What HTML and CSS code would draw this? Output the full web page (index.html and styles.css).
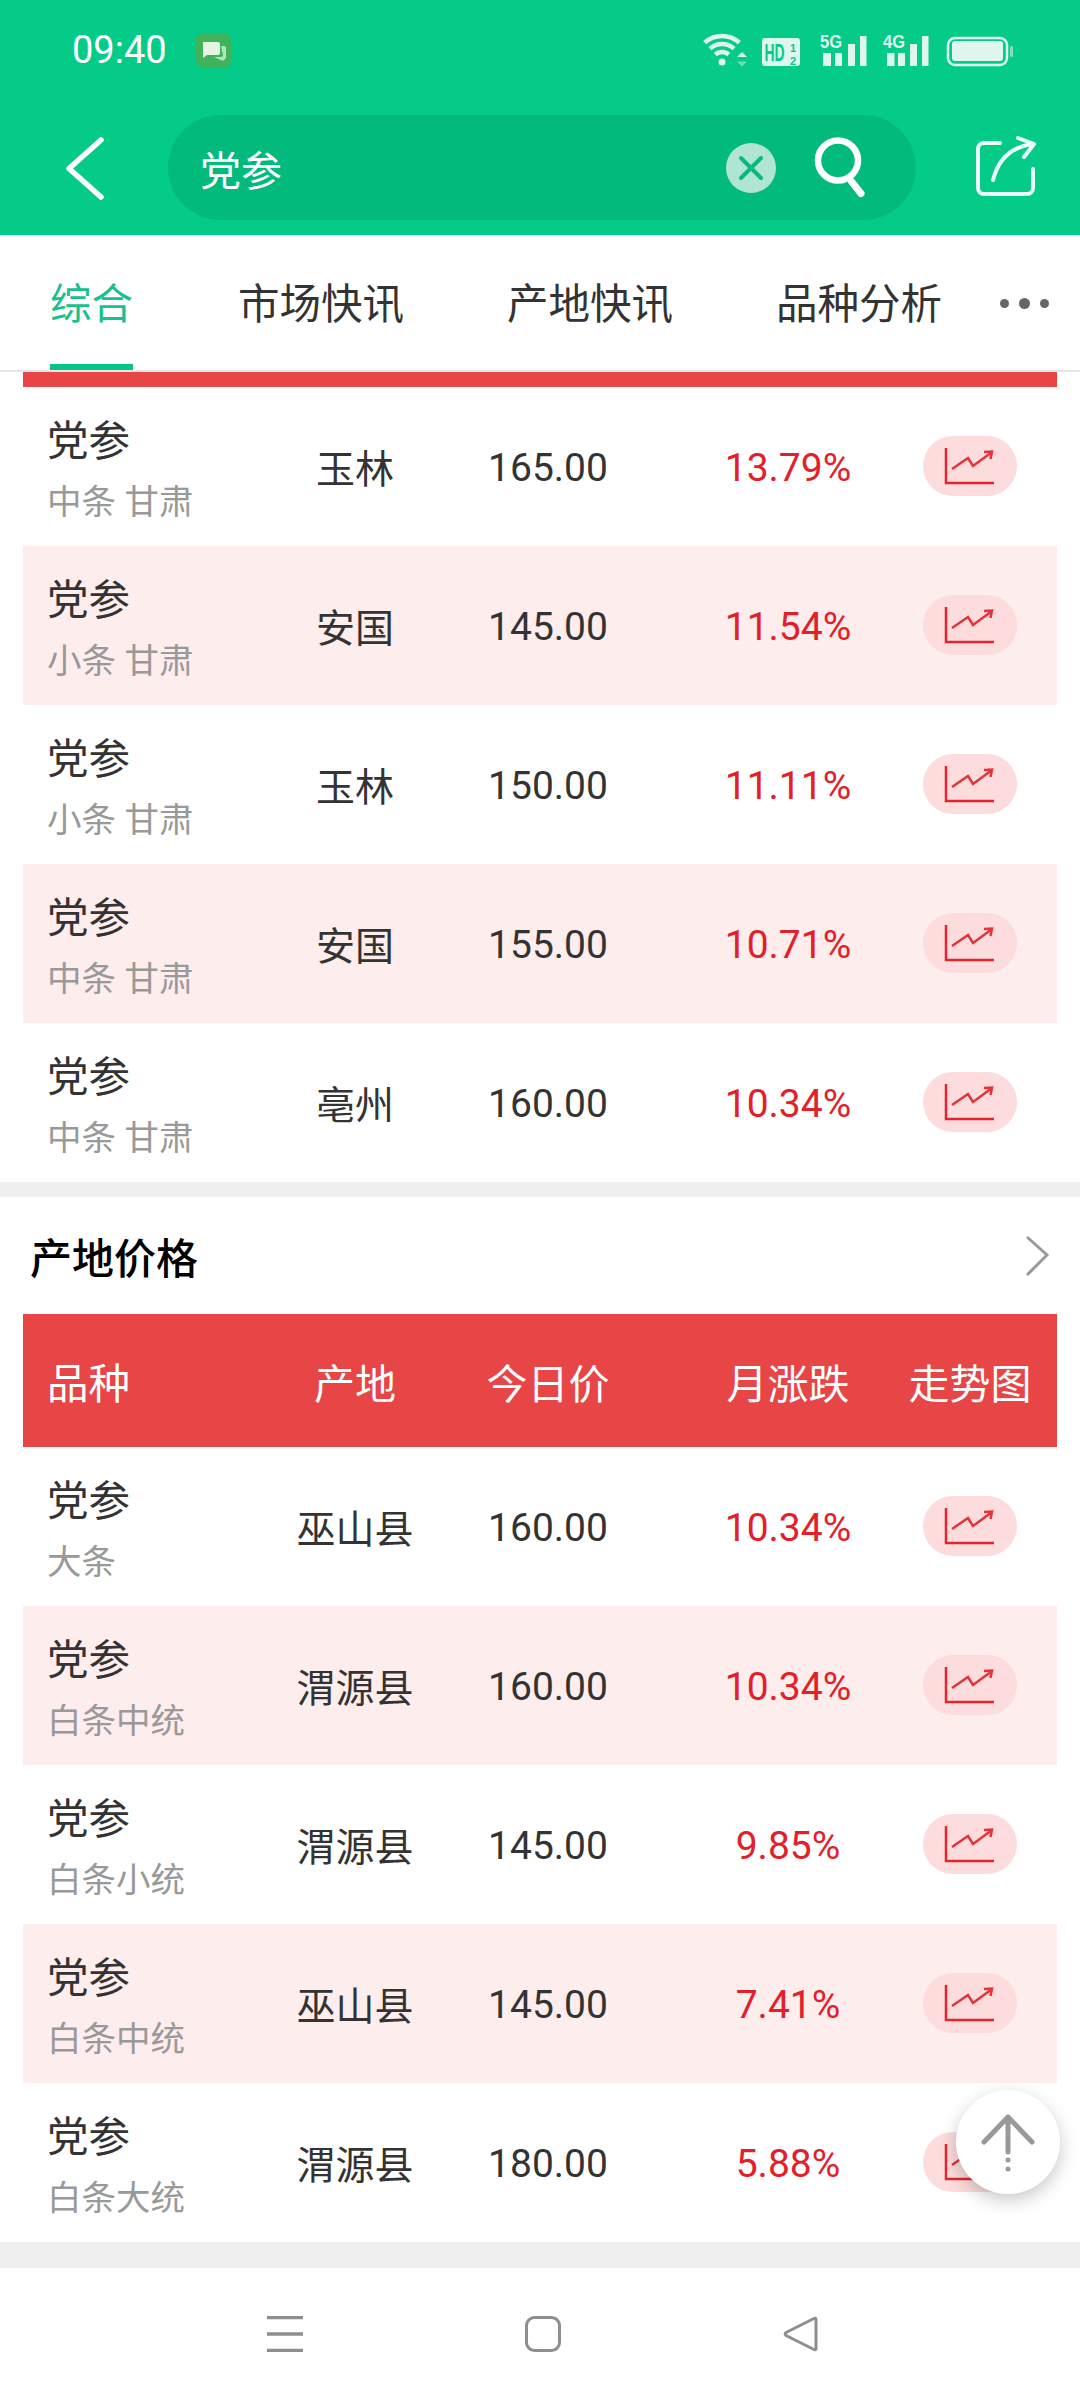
FILE: index.html
```html
<!DOCTYPE html>
<html lang="zh-CN">
<head>
<meta charset="UTF-8">
<meta name="viewport" content="width=device-width, initial-scale=1.0">
<title>党参</title>
<link rel="stylesheet" href="styles.css">
</head>
<body>
<svg class="defs" width="0" height="0">
  <symbol id="trend" viewBox="0 0 94 60">
    <path d="M23 12V47H71" fill="none" stroke="#e4252d" stroke-width="2.500"/>
    <path d="M29 33L45 22L50 30L69 16M61 16L69 15.500L67.500 23" fill="none" stroke="#e2343a" stroke-width="2.500"/>
  </symbol>
</svg>

<div class="page">
  <div class="top">
    <div class="status">
      <span class="time">09:40</span>
      <svg class="app-icon" width="35" height="35" viewBox="0 0 35 35">
        <rect width="35" height="35" rx="8" fill="#3fb25a"/>
        <path d="M7 9h15a2 2 0 0 1 2 2v9a2 2 0 0 1-2 2h-11l-4 3z" fill="#e4f5e6"/>
        <path d="M25 13h3a2 2 0 0 1 2 2v10l-3 3-9-4h7a2 2 0 0 0 2-2z" fill="#b5e2bd"/>
      </svg>
      <svg class="status-icons" width="325" height="50" viewBox="0 0 325 50">
        <g fill="none" stroke="#dff6ee" stroke-width="4.500">
          <path d="M9.600 17.700A26 26 0 0 1 44.400 17.700"/>
          <path d="M15 23.600A18 18 0 0 1 39 23.600"/>
          <path d="M20.300 29.600A10 10 0 0 1 33.700 29.600"/>
        </g>
        <circle cx="27" cy="37" r="3.500" fill="#dff6ee"/>
        <path d="M42 32L47 27L52 32z" fill="#dff6ee"/>
        <path d="M42 36.500L47 41.500L52 36.500z" fill="#6fdcb6"/>
        <rect x="67" y="13" width="38" height="28" rx="3" fill="#dff6ee"/>
        <text class="hd" transform="translate(69.500 36) scale(0.58 1)">HD</text>
        <text class="half" x="95" y="26.500">1</text>
        <text class="half" x="95" y="39.500">2</text>
        <g fill="#dff6ee">
          <text class="net" x="125" y="23" textLength="22" lengthAdjust="spacingAndGlyphs">5G</text>
          <rect x="128" y="28" width="8" height="13"/>
          <rect x="140" y="28" width="7" height="13"/>
          <rect x="153" y="19" width="7" height="22"/>
          <rect x="165" y="11" width="6.500" height="30"/>
          <text class="net" x="188" y="23" textLength="22" lengthAdjust="spacingAndGlyphs">4G</text>
          <rect x="192" y="28" width="7.500" height="13"/>
          <rect x="203" y="28" width="7" height="13"/>
          <rect x="215" y="19" width="7" height="22"/>
          <rect x="227" y="11" width="6.500" height="30"/>
          <rect x="257" y="16" width="51" height="20" rx="3"/>
          <rect x="315" y="21" width="3" height="11" rx="1.500" fill="#7fe0bf"/>
        </g>
        <rect x="253" y="13" width="59" height="27" rx="7" fill="none" stroke="#dff6ee" stroke-width="2.500"/>
      </svg>
    </div>
    <div class="search-row">
      <svg class="back" width="50" height="70" viewBox="0 0 50 70">
        <path d="M41 7L9 35.500L41 64" fill="none" stroke="#fff" stroke-width="5.500" stroke-linecap="round" stroke-linejoin="round"/>
      </svg>
      <div class="search-box">
        <span class="keyword">党参</span>
        <svg class="clear" width="50" height="50" viewBox="0 0 50 50">
          <circle cx="25" cy="25" r="25" fill="#b0e4d3"/>
          <path d="M15 15L35 35M35 15L15 35" stroke="#05b981" stroke-width="4" stroke-linecap="round"/>
        </svg>
        <svg class="search" width="56" height="62" viewBox="0 0 56 62">
          <circle cx="28" cy="23.500" r="20" fill="none" stroke="#fff" stroke-width="6.500"/>
          <path d="M41.500 44.500L51 56.500" stroke="#fff" stroke-width="7" stroke-linecap="round"/>
        </svg>
      </div>
      <svg class="share" width="90" height="85" viewBox="0 0 90 85">
        <path d="M40 18H24a6 6 0 0 0-6 6V63a6 6 0 0 0 6 6H67a6 6 0 0 0 6-6V44" fill="none" stroke="#eafff6" stroke-width="4" stroke-linecap="round"/>
        <path d="M33 55C38 35 50 22 73 19M58 13L74 19L64 32" fill="none" stroke="#eafff6" stroke-width="4" stroke-linecap="round" stroke-linejoin="round"/>
      </svg>
    </div>
  </div>

  <div class="tabs">
    <span class="tab active">综合</span>
    <span class="tab">市场快讯</span>
    <span class="tab">产地快讯</span>
    <span class="tab">品种分析</span>
    <span class="more"><i></i><i></i><i></i></span>
  </div>

  <div class="head-strip"></div>
  <div class="row">
    <div class="name"><b>党参</b><small>中条 甘肃</small></div>
    <div class="cell place">玉林</div><div class="cell num">165.00</div><div class="cell num up">13.79%</div>
    <div class="cell"><span class="chart"><svg width="94" height="60"><use href="#trend"/></svg></span></div>
  </div>
  <div class="row pink">
    <div class="name"><b>党参</b><small>小条 甘肃</small></div>
    <div class="cell place">安国</div><div class="cell num">145.00</div><div class="cell num up">11.54%</div>
    <div class="cell"><span class="chart"><svg width="94" height="60"><use href="#trend"/></svg></span></div>
  </div>
  <div class="row">
    <div class="name"><b>党参</b><small>小条 甘肃</small></div>
    <div class="cell place">玉林</div><div class="cell num">150.00</div><div class="cell num up">11.11%</div>
    <div class="cell"><span class="chart"><svg width="94" height="60"><use href="#trend"/></svg></span></div>
  </div>
  <div class="row pink">
    <div class="name"><b>党参</b><small>中条 甘肃</small></div>
    <div class="cell place">安国</div><div class="cell num">155.00</div><div class="cell num up">10.71%</div>
    <div class="cell"><span class="chart"><svg width="94" height="60"><use href="#trend"/></svg></span></div>
  </div>
  <div class="row">
    <div class="name"><b>党参</b><small>中条 甘肃</small></div>
    <div class="cell place">亳州</div><div class="cell num">160.00</div><div class="cell num up">10.34%</div>
    <div class="cell"><span class="chart"><svg width="94" height="60"><use href="#trend"/></svg></span></div>
  </div>

  <div class="gap"></div>
  <div class="section-title">
    <h2>产地价格</h2>
    <svg width="24" height="42" viewBox="0 0 24 42">
      <path d="M2 2L22 20L2 40" fill="none" stroke="#999" stroke-width="3"/>
    </svg>
  </div>

  <div class="row head">
    <div class="name">品种</div>
    <div class="cell">产地</div><div class="cell">今日价</div><div class="cell">月涨跌</div><div class="cell">走势图</div>
  </div>
  <div class="row">
    <div class="name"><b>党参</b><small>大条</small></div>
    <div class="cell place">巫山县</div><div class="cell num">160.00</div><div class="cell num up">10.34%</div>
    <div class="cell"><span class="chart"><svg width="94" height="60"><use href="#trend"/></svg></span></div>
  </div>
  <div class="row pink">
    <div class="name"><b>党参</b><small>白条中统</small></div>
    <div class="cell place">渭源县</div><div class="cell num">160.00</div><div class="cell num up">10.34%</div>
    <div class="cell"><span class="chart"><svg width="94" height="60"><use href="#trend"/></svg></span></div>
  </div>
  <div class="row">
    <div class="name"><b>党参</b><small>白条小统</small></div>
    <div class="cell place">渭源县</div><div class="cell num">145.00</div><div class="cell num up">9.85%</div>
    <div class="cell"><span class="chart"><svg width="94" height="60"><use href="#trend"/></svg></span></div>
  </div>
  <div class="row pink">
    <div class="name"><b>党参</b><small>白条中统</small></div>
    <div class="cell place">巫山县</div><div class="cell num">145.00</div><div class="cell num up">7.41%</div>
    <div class="cell"><span class="chart"><svg width="94" height="60"><use href="#trend"/></svg></span></div>
  </div>
  <div class="row">
    <div class="name"><b>党参</b><small>白条大统</small></div>
    <div class="cell place">渭源县</div><div class="cell num">180.00</div><div class="cell num up">5.88%</div>
    <div class="cell"><span class="chart"><svg width="94" height="60"><use href="#trend"/></svg></span></div>
  </div>
  <div class="gap bottom-gap"></div>

  <div class="nav">
    <svg width="36" height="36" viewBox="0 0 36 36">
      <path d="M0 1.500H36M0 18H36M0 34.500H36" stroke="#8e8e8e" stroke-width="3.500"/>
    </svg>
    <svg width="36" height="36" viewBox="0 0 36 36">
      <rect x="1.500" y="1.500" width="33" height="33" rx="8" fill="none" stroke="#8e8e8e" stroke-width="3"/>
    </svg>
    <svg width="36" height="36" viewBox="0 0 36 36">
      <path d="M33 3.500V32.500Q33 34.500 31 33.500L3 19.500Q1.500 18 3 16.500L31 2.500Q33 1.500 33 3.500z" fill="none" stroke="#8e8e8e" stroke-width="3" stroke-linejoin="round"/>
    </svg>
  </div>

  <div class="to-top">
    <svg width="104" height="104" viewBox="0 0 104 104">
      <path d="M28 52L52 27L76 52M52 27V62" fill="none" stroke="#999" stroke-width="5" stroke-linecap="round" stroke-linejoin="round"/>
      <circle cx="52" cy="70" r="2.500" fill="#999"/>
      <circle cx="52" cy="79" r="2.500" fill="#999"/>
    </svg>
  </div>
</div>
</body>
</html>
```

FILE: styles.css
```css
body, html {
  margin: 0;
  background: #fff;
}

.defs {
  position: absolute;
}

.page {
  position: relative;
  width: 1080px;
  height: 2400px;
  overflow: hidden;
  font-family: Roboto, "Noto Sans CJK SC", sans-serif;
  color: #333;
}

svg {
  display: block;
  flex: none;
}

/* green header */
.top {
  background-color: #04cb88;
  height: 235px;
}

.status {
  display: flex;
  align-items: center;
  height: 100px;
  padding-left: 72px;
}

.time {
  font-size: 38px;
  color: #fff;
  width: 124px;
}

.status-icons {
  margin-left: 464px;
}

.hd {
  font: bold 24px "Liberation Sans", sans-serif;
  fill: #04cb88;
}

.half {
  font: bold 11px "Liberation Sans", sans-serif;
  fill: #04cb88;
}

.net {
  font: bold 18px "Liberation Sans", sans-serif;
}

.search-row {
  display: flex;
  align-items: center;
  height: 135px;
  padding-left: 60px;
}

.search-box {
  display: flex;
  align-items: center;
  width: 666px;
  height: 105px;
  margin: 0 44px 0 58px;
  padding: 0 50px 0 32px;
  border-radius: 53px;
  background-color: #03ba7d;
}

.keyword {
  flex: 1;
  font-size: 41px;
  color: #fff;
}

.clear {
  margin-right: 34px;
}

/* tabs */
.tabs {
  display: flex;
  gap: 103px;
  height: 135px;
  padding-left: 50px;
  border-bottom: 2px solid #e6e6e6;
}

.tab {
  height: 135px;
  box-sizing: border-box;
  padding-top: 44px;
  font-size: 41.500px;
  line-height: 52px;
}

.tab.active {
  margin-right: 2px;
  color: #1cc08c;
  border-bottom: 6px solid #05c488;
}

.more {
  display: flex;
  align-items: center;
  gap: 10px;
  height: 135px;
  margin: 1px 0 0 -45px;
}

.more i {
  width: 9px;
  height: 9px;
  border-radius: 50%;
  background-color: #666;
}

.more i:nth-child(2) {
  width: 11px;
  height: 11px;
}

/* price tables */
.head-strip {
  height: 15px;
  margin: 0 23px;
  background-color: #e84546;
}

.row {
  display: grid;
  grid-template-columns: 261px 142px 244px 236px 128px;
  height: 159px;
  margin: 0 23px;
  padding-right: 23px;
  font-size: 39px;
}

.row.pink {
  background-color: #fdeded;
}

.name {
  display: flex;
  flex-direction: column;
  justify-content: center;
  gap: 10px;
  padding: 10px 0 0 24px;
}

.name b {
  font-weight: 400;
  font-size: 41.500px;
  line-height: 50px;
}

.name small {
  font-size: 34.500px;
  line-height: 50px;
  color: #999;
}

.cell {
  display: flex;
  align-items: center;
  justify-content: center;
  white-space: nowrap;
}

.place {
  padding-bottom: 2px;
}

.num {
  padding-top: 2px;
}

.up {
  color: #e3202a;
}

.chart {
  display: block;
  width: 94px;
  height: 60px;
  margin-bottom: 1px;
  border-radius: 30px;
  background-color: #fcdcdc;
}

.row.head {
  height: 133px;
  background-color: #e84546;
  color: #fff;
  font-size: 41px;
}

.row.head .name {
  padding-top: 0;
  font-size: 41.500px;
}

.gap {
  height: 15px;
  background-color: #efefef;
}

.bottom-gap {
  height: 26px;
}

.section-title {
  display: flex;
  align-items: center;
  justify-content: space-between;
  height: 117px;
  padding: 0 31px 0 30px;
}

.section-title h2 {
  margin: 0;
  font-size: 42px;
  font-weight: 500;
  color: #000;
}

/* system nav and floating button */
.nav {
  display: flex;
  align-items: center;
  justify-content: center;
  gap: 222px;
  height: 132px;
  padding-left: 5px;
}

.to-top {
  position: absolute;
  left: 956px;
  top: 2090px;
  width: 104px;
  height: 104px;
  border-radius: 50%;
  background-color: #fff;
  box-shadow: 0 6px 18px rgba(0, 0, 0, 0.22);
}
```
